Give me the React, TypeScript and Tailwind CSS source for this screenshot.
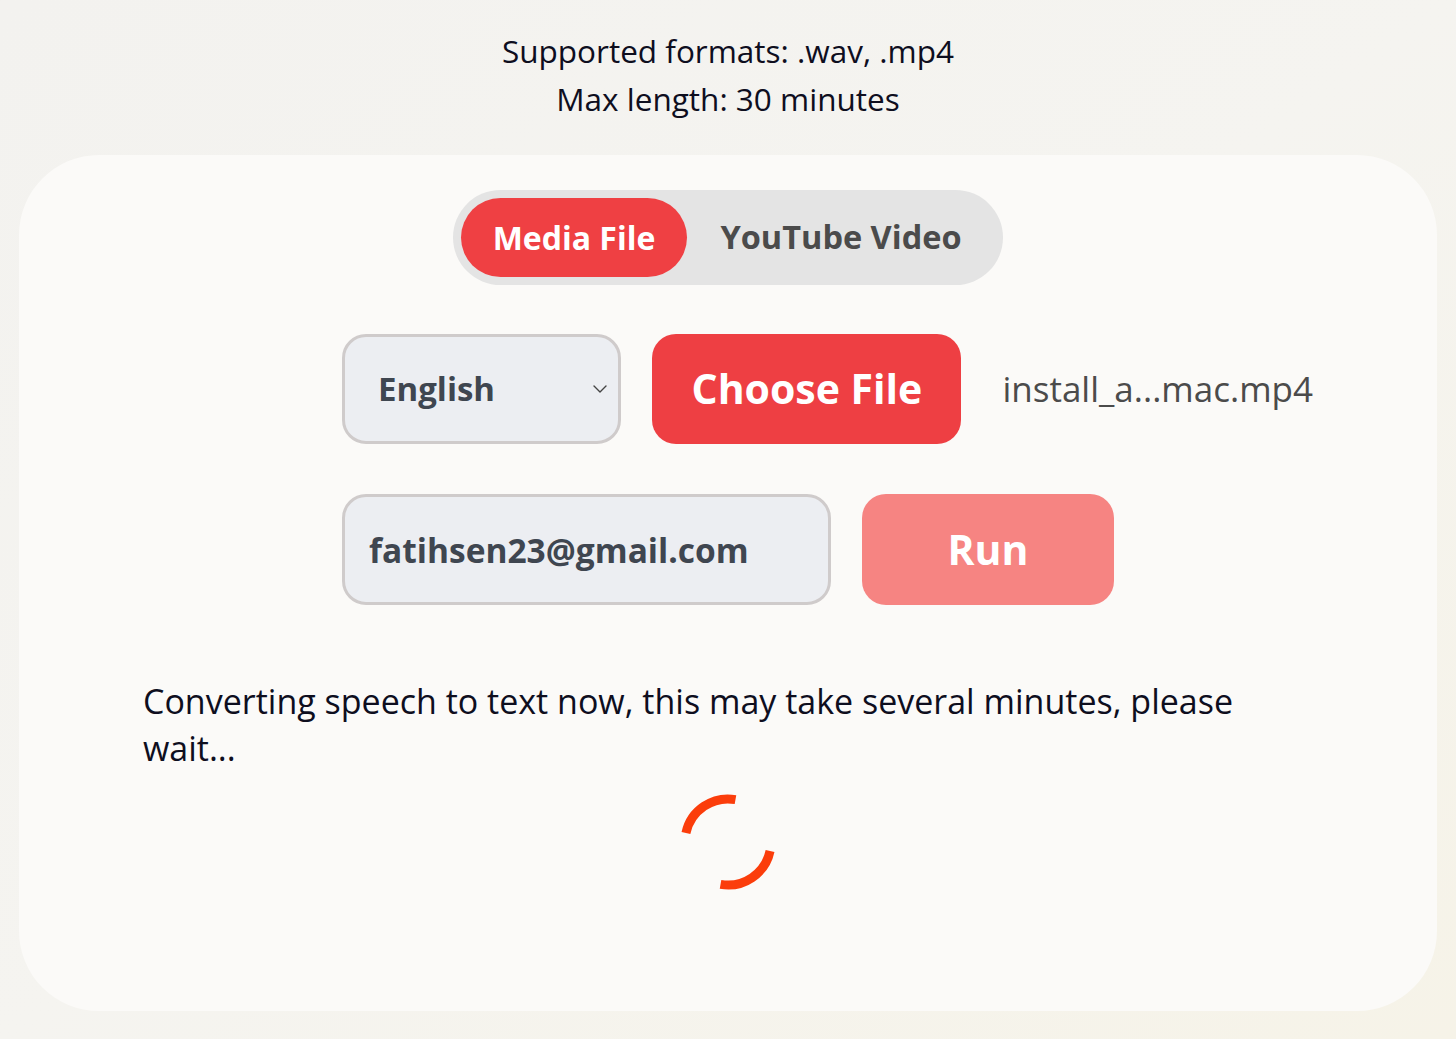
import React from 'react';
import { ChevronDown } from 'lucide-react';

const Spinner: React.FC = () => (
  <svg width="100" height="100" viewBox="0 0 100 100" className="block">
    <path d="M92.06 58.94 A43 43 0 0 1 42.53 92.35" fill="none" stroke="#fb3d0b" strokeWidth="9" />
    <path d="M7.94 41.06 A43 43 0 0 1 57.47 7.65" fill="none" stroke="#fb3d0b" strokeWidth="9" />
  </svg>
);

export default function App() {
  const [mode, setMode] = React.useState<'media' | 'youtube'>('media');
  const [email, setEmail] = React.useState('fatihsen23@gmail.com');

  return (
    <div
      className="min-h-[1039px] w-full bg-gradient-to-br from-[#f3f2ef] via-[#f5f4f0] to-[#f6f3e8] pt-[27px] text-[#0e0e1e]"
      style={{ fontFamily: '"Open Sans", "Noto Sans", sans-serif' }}
    >
      <div className="text-center text-[31.5px] leading-[48px]">
        <p>Supported formats: .wav, .mp4</p>
        <p>Max length: 30 minutes</p>
      </div>

      <div className="mx-[19px] mt-[32px] rounded-[80px] bg-[#fbfaf8] px-[124px] pt-[35px] pb-[119px]">
        <div className="flex justify-center">
          <div className="flex h-[95px] w-[550px] items-center rounded-full bg-[#e4e4e4] p-[8px]">
            <button
              type="button"
              onClick={() => setMode('media')}
              className={`flex h-[79px] w-[226px] items-center justify-center rounded-full text-[32px] font-bold ${
                mode === 'media' ? 'bg-[#ef4043] text-white' : 'text-[#4b4b4b]'
              }`}
            >
              Media File
            </button>
            <button
              type="button"
              onClick={() => setMode('youtube')}
              className={`flex h-[79px] flex-1 items-center justify-center rounded-full text-[32.5px] font-bold ${
                mode === 'youtube' ? 'bg-[#ef4043] text-white' : 'text-[#4b4b4b]'
              }`}
            >
              YouTube Video
            </button>
          </div>
        </div>

        <div className="mt-[49px] flex flex-col gap-[50px] pl-[199px]">
          <div className="flex items-center">
            <div className="relative flex h-[110px] w-[281px] items-center rounded-[24px] border-[3px] border-[#cfcbcb] bg-[#eceef2] pl-[33px]">
              <span className="text-[33px] font-bold text-[#3f4650]">English</span>
              <ChevronDown className="absolute right-[6px] top-[40px] h-[24px] w-[24px] text-[#444]" strokeWidth={1.4} />
            </div>
            <button
              type="button"
              className="ml-[31px] h-[110px] w-[311px] rounded-[24px] bg-[#ee3f43] text-[41px] font-bold text-white"
            >
              Choose File
            </button>
            <span className="ml-[41px] text-[35px] text-[#4b4b4b]">install_a...mac.mp4</span>
          </div>

          <div className="flex items-center">
            <input
              value={email}
              onChange={(e) => setEmail(e.target.value)}
              className="h-[111px] w-[489px] rounded-[24px] border-[3px] border-[#cfcbcb] bg-[#eceef2] pl-[24px] text-[33.5px] font-bold text-[#3f4650] outline-none"
            />
            <button
              type="button"
              className="ml-[31px] h-[111px] w-[252px] rounded-[24px] bg-[#f68482] text-[41px] font-bold text-white"
            >
              Run
            </button>
          </div>
        </div>

        <p className="mt-[73px] text-[34px] leading-[47px]">
          Converting speech to text now, this may take several minutes, please wait...
        </p>

        <div className="mt-[20px] flex justify-center">
          <Spinner />
        </div>
      </div>
    </div>
  );
}
